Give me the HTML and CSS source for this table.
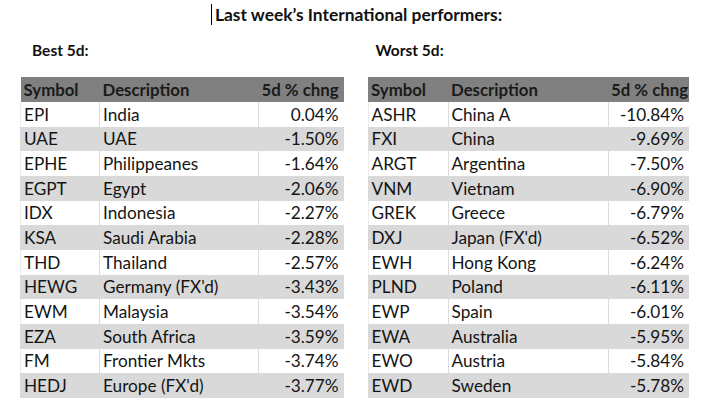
FILE: index.html
```html
<!DOCTYPE html>
<html>
<head>
<meta charset="utf-8">
<link rel="stylesheet" href="styles.css">
</head>
<body>
<div class="page">
  <div class="title-row"><span class="title">Last week’s International performers:</span></div>
  <div class="tables">
    <section class="block block-best">
      <h2 class="sub">Best 5d:</h2>
      <table class="perf">
        <colgroup><col class="c-sym"><col class="c-desc"><col class="c-pct"></colgroup>
        <thead><tr><th>Symbol</th><th>Description</th><th class="num">5d % chng</th></tr></thead>
        <tbody>
          <tr><td>EPI</td><td>India</td><td class="num">0.04%</td></tr>
          <tr><td>UAE</td><td>UAE</td><td class="num">-1.50%</td></tr>
          <tr><td>EPHE</td><td>Philippeanes</td><td class="num">-1.64%</td></tr>
          <tr><td>EGPT</td><td>Egypt</td><td class="num">-2.06%</td></tr>
          <tr><td>IDX</td><td>Indonesia</td><td class="num">-2.27%</td></tr>
          <tr><td>KSA</td><td>Saudi Arabia</td><td class="num">-2.28%</td></tr>
          <tr><td>THD</td><td>Thailand</td><td class="num">-2.57%</td></tr>
          <tr><td>HEWG</td><td>Germany (FX'd)</td><td class="num">-3.43%</td></tr>
          <tr><td>EWM</td><td>Malaysia</td><td class="num">-3.54%</td></tr>
          <tr><td>EZA</td><td>South Africa</td><td class="num">-3.59%</td></tr>
          <tr><td>FM</td><td>Frontier Mkts</td><td class="num">-3.74%</td></tr>
          <tr><td>HEDJ</td><td>Europe (FX'd)</td><td class="num">-3.77%</td></tr>
        </tbody>
      </table>
    </section>
    <section class="block block-worst">
      <h2 class="sub">Worst 5d:</h2>
      <table class="perf">
        <colgroup><col class="c-sym"><col class="c-desc"><col class="c-pct"></colgroup>
        <thead><tr><th>Symbol</th><th>Description</th><th class="num">5d % chng</th></tr></thead>
        <tbody>
          <tr><td>ASHR</td><td>China A</td><td class="num">-10.84%</td></tr>
          <tr><td>FXI</td><td>China</td><td class="num">-9.69%</td></tr>
          <tr><td>ARGT</td><td>Argentina</td><td class="num">-7.50%</td></tr>
          <tr><td>VNM</td><td>Vietnam</td><td class="num">-6.90%</td></tr>
          <tr><td>GREK</td><td>Greece</td><td class="num">-6.79%</td></tr>
          <tr><td>DXJ</td><td>Japan (FX'd)</td><td class="num">-6.52%</td></tr>
          <tr><td>EWH</td><td>Hong Kong</td><td class="num">-6.24%</td></tr>
          <tr><td>PLND</td><td>Poland</td><td class="num">-6.11%</td></tr>
          <tr><td>EWP</td><td>Spain</td><td class="num">-6.01%</td></tr>
          <tr><td>EWA</td><td>Australia</td><td class="num">-5.95%</td></tr>
          <tr><td>EWO</td><td>Austria</td><td class="num">-5.84%</td></tr>
          <tr><td>EWD</td><td>Sweden</td><td class="num">-5.78%</td></tr>
        </tbody>
      </table>
    </section>
  </div>
</div>
</body>
</html>
```
FILE: styles.css
```css
* { box-sizing: border-box; }
html, body { margin: 0; padding: 0; background: #fff; }
body {
  width: 713px;
  height: 414px;
  overflow: hidden;
  font-family: Lato, "Open Sans", sans-serif;
  color: #141414;
}
.page { display: flex; flex-direction: column; }
.title-row { padding: 4px 0 0 211px; height: 37px; }
.title {
  display: inline-block;
  border-left: 1px solid #000;
  padding-left: 3px;
  height: 21px;
  line-height: 21px;
  font-weight: 700;
  font-size: 17.4px;
  color: #111;
}
.tables { display: flex; padding-left: 20px; gap: 24px; }
.block { display: flex; flex-direction: column; }
.sub {
  margin: 0;
  font-size: 15.5px;
  font-weight: 700;
  height: 40px;
  line-height: 20px;
  padding-top: 3px;
  color: #111;
}
.block-best .sub { padding-left: 12px; }
.block-worst .sub { padding-left: 8px; }
.perf {
  border-collapse: collapse;
  table-layout: fixed;
  font-size: 17.2px;
}
.block-best .perf { width: 323px; }
.block-worst .perf { width: 321px; }
.block-best .c-sym { width: 79px; }
.block-best .c-desc { width: 159px; }
.block-best .c-pct { width: 85px; }
.block-worst .c-sym { width: 80px; }
.block-worst .c-desc { width: 160px; }
.block-worst .c-pct { width: 81px; }
.perf th {
  background: #808080;
  color: #1a1a1a;
  font-weight: 700;
  font-size: 16.8px;
  text-align: left;
  height: 25px;
  padding: 0 3px;
  white-space: nowrap;
}
.perf td {
  height: 24.67px;
  padding: 0 3px;
  white-space: nowrap;
}
.perf tbody tr:nth-child(odd) td {
  background: #fff;
  border-left: 1px solid #dcdcdc;
}
.perf tbody tr:nth-child(odd) td:first-child { border-left-color: #ececec; }
.perf tbody tr:nth-child(even) td { background: #d9d9d9; border-left: 1px solid #d9d9d9; }
.perf .num { text-align: right; padding-right: 5px; }
```
